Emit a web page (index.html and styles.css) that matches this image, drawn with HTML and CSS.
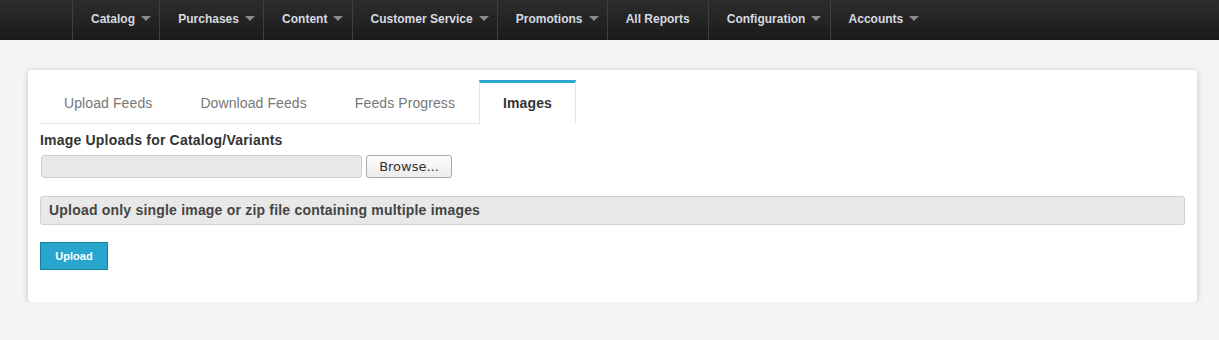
FILE: index.html
```html
<!DOCTYPE html>
<html>

<head>
  <title>Feeds - Images</title>
  <link rel="stylesheet" href="styles.css">
</head>

<body>
  <div class="navbar">
    <ul class="nav">
      <li class="dropdown">Catalog <b class="caret"></b></li>
      <li class="dropdown">Purchases <b class="caret"></b></li>
      <li class="dropdown">Content <b class="caret"></b></li>
      <li class="dropdown">Customer Service <b class="caret"></b></li>
      <li class="dropdown">Promotions <b class="caret"></b></li>
      <li>All Reports</li>
      <li class="dropdown">Configuration <b class="caret"></b></li>
      <li class="dropdown">Accounts <b class="caret"></b></li>
    </ul>
  </div>

  <div class="page">
    <div class="box">
      <ul class="tabs">
        <li>Upload Feeds</li>
        <li>Download Feeds</li>
        <li>Feeds Progress</li>
        <li class="active">Images</li>
      </ul>

      <form>
        <label for="imageFile">Image Uploads for Catalog/Variants</label>
        <div class="file-row">
          <input type="text" class="file-name" id="imageFile" disabled>
          <button type="button" class="browse">Browse...</button>
        </div>
        <div class="note">Upload only single image or zip file containing multiple images</div>
        <input type="submit" class="btn-upload" value="Upload">
      </form>
    </div>
  </div>
</body>

</html>
```

FILE: styles.css
```css
body {
  margin: 0;
  background-color: #f4f4f4;
  font-family: "Liberation Sans", Arial, sans-serif;
  font-size: 14px;
  letter-spacing: 0.2px;
  color: #333;
}
.navbar {
  height: 40px;
  background: linear-gradient(#2d2d2d, #1a1a1a);
}
.nav {
  list-style: none;
  margin: 0;
  padding: 0 0 0 72px;
  display: flex;
  height: 40px;
}
.nav li {
  display: flex;
  align-items: center;
  padding: 0 18px 3px 18px;
  border-left: 1px solid #3f3f3f;
  color: #d6dae0;
  font-weight: bold;
  font-size: 12px;
  letter-spacing: 0;
}
.nav li.dropdown {
  padding-right: 8.2px;
}
.caret {
  display: inline-block;
  width: 0;
  height: 0;
  margin-left: 6px;
  border-top: 5px solid #8c8c8c;
  border-left: 5px solid transparent;
  border-right: 5px solid transparent;
}
.page {
  padding: 30px 22px 0 28px;
}
.box {
  background: #fff;
  border-radius: 4px;
  box-shadow: 0 1px 6px rgba(0, 0, 0, 0.2);
  padding: 10px 12px 32px 12px;
}
.tabs {
  list-style: none;
  margin: 0;
  padding: 0;
  display: inline-flex;
  border-bottom: 1px solid #e3e3e3;
}
.tabs li {
  height: 40px;
  line-height: 40px;
  padding: 0 24px;
  border-top: 3px solid transparent;
  color: #777;
  letter-spacing: 0.1px;
}
.tabs li.active {
  border-top-color: #2aa7cf;
  border-left: 1px solid #e6e6e6;
  border-right: 1px solid #e6e6e6;
  padding: 0 23px;
  margin-bottom: -1px;
  height: 41px;
  background: #fff;
  color: #333;
  font-weight: bold;
}
label {
  display: block;
  margin-top: 6px;
  line-height: 20px;
  font-weight: bold;
  color: #333;
}
.file-row {
  display: flex;
  gap: 4px;
  margin-top: 5px;
  padding-left: 1px;
}
.file-name {
  width: 321px;
  height: 23px;
  box-sizing: border-box;
  margin: 0;
  background: #e8e8e8;
  border: 1px solid #cfcfcf;
  border-radius: 3px;
}
.browse {
  width: 86px;
  height: 23px;
  margin: 0;
  padding: 0;
  font-family: "DejaVu Sans", sans-serif;
  font-size: 13px;
  letter-spacing: 0;
  color: #333;
  background: linear-gradient(#fdfdfd, #ececec);
  border: 1px solid #a9a9a9;
  border-radius: 3px;
}
.note {
  margin-top: 18px;
  height: 27px;
  line-height: 27px;
  padding: 0 8px;
  background: #e8e8e8;
  border: 1px solid #d0d0d0;
  border-radius: 3px;
  font-weight: bold;
  color: #444;
}
.btn-upload {
  display: block;
  margin-top: 17px;
  width: 68px;
  height: 28px;
  background: #29a6cd;
  border: 1px solid #1c7c99;
  color: #fff;
  font-family: "Liberation Sans", Arial, sans-serif;
  font-weight: bold;
  font-size: 11px;
  letter-spacing: 0;
}
```
